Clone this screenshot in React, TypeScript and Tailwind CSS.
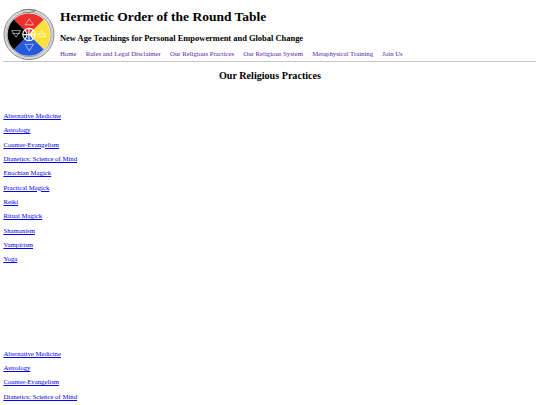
const practices = [
  'Alternative Medicine',
  'Astrology',
  'Counter-Evangelism',
  'Dianetics: Science of Mind',
  'Enochian Magick',
  'Practical Magick',
  'Reiki',
  'Ritual Magick',
  'Shamanism',
  'Vampirism',
  'Yoga',
];

const navigation = [
  'Home',
  'Rules and Legal Disclaimer',
  'Our Religious Practices',
  'Our Religious System',
  'Metaphysical Training',
  'Join Us',
];

function Logo() {
  return (
    <svg viewBox="0 0 52 52" className="block h-[52px] w-[52px] shrink-0" fill="none">
      <circle cx="26" cy="26.5" r="25" fill="#ededed" stroke="#666" strokeWidth="0.8" />
      <circle cx="26" cy="26.5" r="23.6" stroke="#b5b5b5" strokeWidth="0.6" />
      <circle cx="26" cy="26.5" r="22.2" fill="#f1f1f1" stroke="#777" strokeWidth="0.7" />
      <path d="M18 2.6 Q25 0.3 29 2.4 L33 1.8 M20 4.8 Q26 5.5 32 3.2" stroke="#777" strokeWidth="0.8" />
      <g transform="translate(-0.2 0.6)">
        <path d="M26 26 L11 11 A21.3 21.3 0 0 1 41 11 Z" fill="#ed302b" />
        <path d="M26 26 L41 11 A21.3 21.3 0 0 1 41 41 Z" fill="#fbe13c" />
        <path d="M26 26 L41 41 A21.3 21.3 0 0 1 11 41 Z" fill="#2759dc" />
        <path d="M26 26 L11 41 A21.3 21.3 0 0 1 11 11 Z" fill="#000" />
        <g stroke="#fff" strokeOpacity="0.75" strokeWidth="0.75">
          <path d="M26.5 10.2 L30.7 16.2 H22.3 Z" />
          <path d="M22.3 35.7 H30.7 L26.5 42.2 Z" />
          <path d="M8.8 22 H17.7 L13.3 28.6 Z M9.5 24.8 H17" />
          <path d="M39 21.8 L43.4 28 H34.6 Z M35 25.2 H43" />
        </g>
        <g stroke="#fff" strokeWidth="1.1">
          <circle cx="26.2" cy="26" r="6.2" />
          <path d="M26.2 19.5 V32.5 M20 26 H32.4 M22 21.5 Q26.2 26 22 30.5 M30.4 21.5 Q26.2 26 30.4 30.5" />
        </g>
      </g>
    </svg>
  );
}

function PracticeLinks({ names }: { names: string[] }) {
  return (
    <ul className="flex flex-col">
      {names.map((name) => (
        <li key={name} className="flex h-[14.344px] items-start">
          <a href="#" className="text-[#0000ee] underline">
            {name}
          </a>
        </li>
      ))}
    </ul>
  );
}

export default function App() {
  return (
    <div className="h-[405px] overflow-hidden bg-white pl-[3.4px] pr-[3.4px] pt-[8px] font-['Liberation_Serif',serif] text-[6.75px] leading-[8px] text-black">
      <header className="flex h-[54px] w-[533px] border-b border-[#c4c4c4]">
        <Logo />
        <div className="ml-[4.6px] whitespace-nowrap">
          <h1 className="mt-[1px] text-[13.5px] font-bold leading-[16px]">Hermetic Order of the Round Table</h1>
          <h2 className="mt-[8px] text-[8.45px] font-bold leading-[10px]">
            New Age Teachings for Personal Empowerment and Global Change
          </h2>
          <nav className="mt-[7px] flex gap-[9.2px] text-[#5a1aa8]">
            {navigation.map((item) => (
              <a key={item} href="#">
                {item}
              </a>
            ))}
          </nav>
        </div>
      </header>
      <h2 className="mt-[8px] text-center text-[10.125px] font-bold leading-[12px]">Our Religious Practices</h2>
      <main className="mt-[30px]">
        <PracticeLinks names={practices} />
        <div className="mt-[80px]">
          <PracticeLinks names={practices.slice(0, 4)} />
        </div>
      </main>
    </div>
  );
}
